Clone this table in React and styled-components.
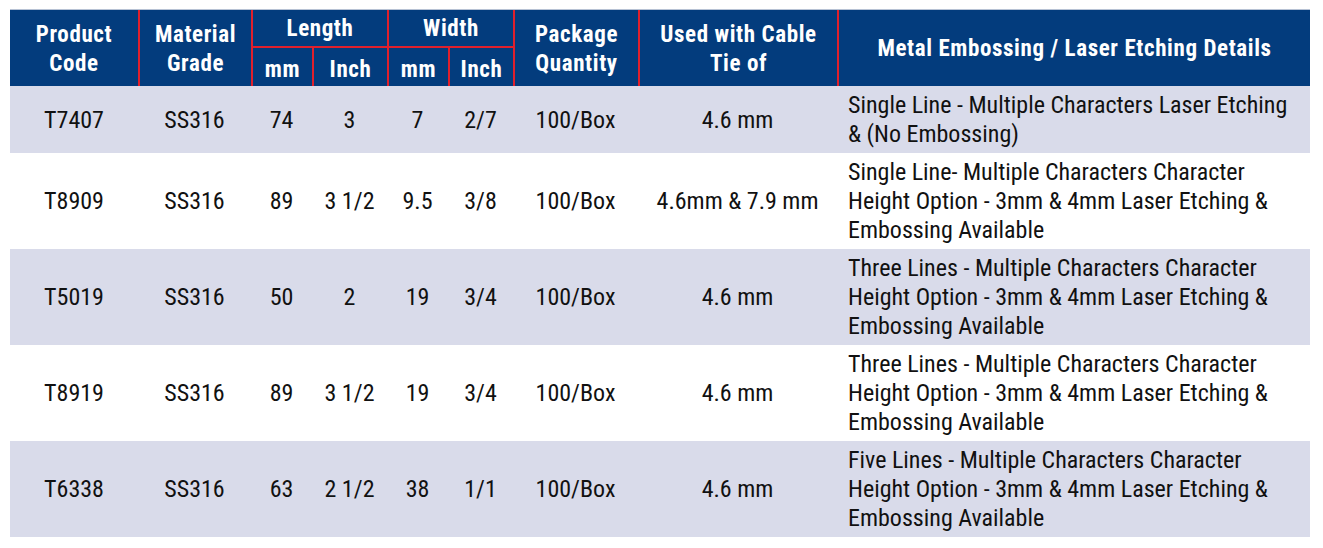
import React from "react";
import styled, { createGlobalStyle } from "styled-components";

const COLS = "128px 113px 61px 75px 61px 65px 125px 199px 473px";
const BLUE = "#033c7d";
const RED = "#e0202c";
const STRIPE = "#d9dbea";

const Global = createGlobalStyle`
  body { margin: 0; background: #fff; }
`;

const Page = styled.div`
  padding: 9px 10px;
  font-family: "Roboto Condensed", "Liberation Sans", sans-serif;
`;

const Table = styled.div`
  width: 1300px;
`;

const Head = styled.div`
  display: grid;
  grid-template-columns: ${COLS};
  grid-template-rows: 38px 38px;
  background: ${BLUE};
  border-top: 1px solid #b7c2d4;
`;

const HeadCell = styled.div`
  grid-column: ${p => p.col};
  grid-row: ${p => p.row};
  display: flex;
  align-items: center;
  justify-content: center;
  text-align: center;
  color: #fff;
  font-weight: 700;
  font-size: 23px;
  line-height: 29px;
  letter-spacing: 0.6px;
  border-left: ${p => (p.first ? "none" : `2px solid ${RED}`)};
  border-bottom: ${p => (p.group ? `2px solid ${RED}` : "none")};
  padding-top: ${p => (p.sub ? "4px" : "1px")};
`;

const Row = styled.div`
  display: grid;
  grid-template-columns: ${COLS};
  background: ${p => (p.striped ? STRIPE : "#fff")};
  color: #111;
  font-size: 24px;
  line-height: 29px;
`;

const Cell = styled.div`
  display: flex;
  align-items: center;
  justify-content: center;
  text-align: center;
  padding: 5px 0 4px;
`;

const Details = styled.div`
  padding: 5px 6px 4px 11px;
  display: flex;
  align-items: center;
`;

const rows = [
  ["T7407", "SS316", "74", "3", "7", "2/7", "100/Box", "4.6 mm", ["Single Line - Multiple Characters Laser Etching", "& (No Embossing)"]],
  ["T8909", "SS316", "89", "3 1/2", "9.5", "3/8", "100/Box", "4.6mm & 7.9 mm", ["Single Line- Multiple Characters Character", "Height Option - 3mm & 4mm Laser Etching &", "Embossing Available"]],
  ["T5019", "SS316", "50", "2", "19", "3/4", "100/Box", "4.6 mm", ["Three Lines - Multiple Characters Character", "Height Option - 3mm & 4mm Laser Etching &", "Embossing Available"]],
  ["T8919", "SS316", "89", "3 1/2", "19", "3/4", "100/Box", "4.6 mm", ["Three Lines - Multiple Characters Character", "Height Option - 3mm & 4mm Laser Etching &", "Embossing Available"]],
  ["T6338", "SS316", "63", "2 1/2", "38", "1/1", "100/Box", "4.6 mm", ["Five Lines - Multiple Characters Character", "Height Option - 3mm & 4mm Laser Etching &", "Embossing Available"]],
];

export default function App() {
  return (
    <>
      <Global />
      <Page>
        <Table>
          <Head>
            <HeadCell col="1" row="1 / 3" first>Product<br />Code</HeadCell>
            <HeadCell col="2" row="1 / 3">Material<br />Grade</HeadCell>
            <HeadCell col="3 / 5" row="1" group>Length</HeadCell>
            <HeadCell col="3" row="2" sub>mm</HeadCell>
            <HeadCell col="4" row="2" sub>Inch</HeadCell>
            <HeadCell col="5 / 7" row="1" group>Width</HeadCell>
            <HeadCell col="5" row="2" sub>mm</HeadCell>
            <HeadCell col="6" row="2" sub>Inch</HeadCell>
            <HeadCell col="7" row="1 / 3">Package<br />Quantity</HeadCell>
            <HeadCell col="8" row="1 / 3">Used with Cable<br />Tie of</HeadCell>
            <HeadCell col="9" row="1 / 3">Metal Embossing / Laser Etching Details</HeadCell>
          </Head>
          {rows.map((r, i) => (
            <Row key={r[0]} striped={i % 2 === 0}>
              {r.slice(0, 8).map((v, j) => (
                <Cell key={j}>{v}</Cell>
              ))}
              <Details>
                <div>
                  {r[8].map((l, k) => (
                    <div key={k}>{l}</div>
                  ))}
                </div>
              </Details>
            </Row>
          ))}
        </Table>
      </Page>
    </>
  );
}
